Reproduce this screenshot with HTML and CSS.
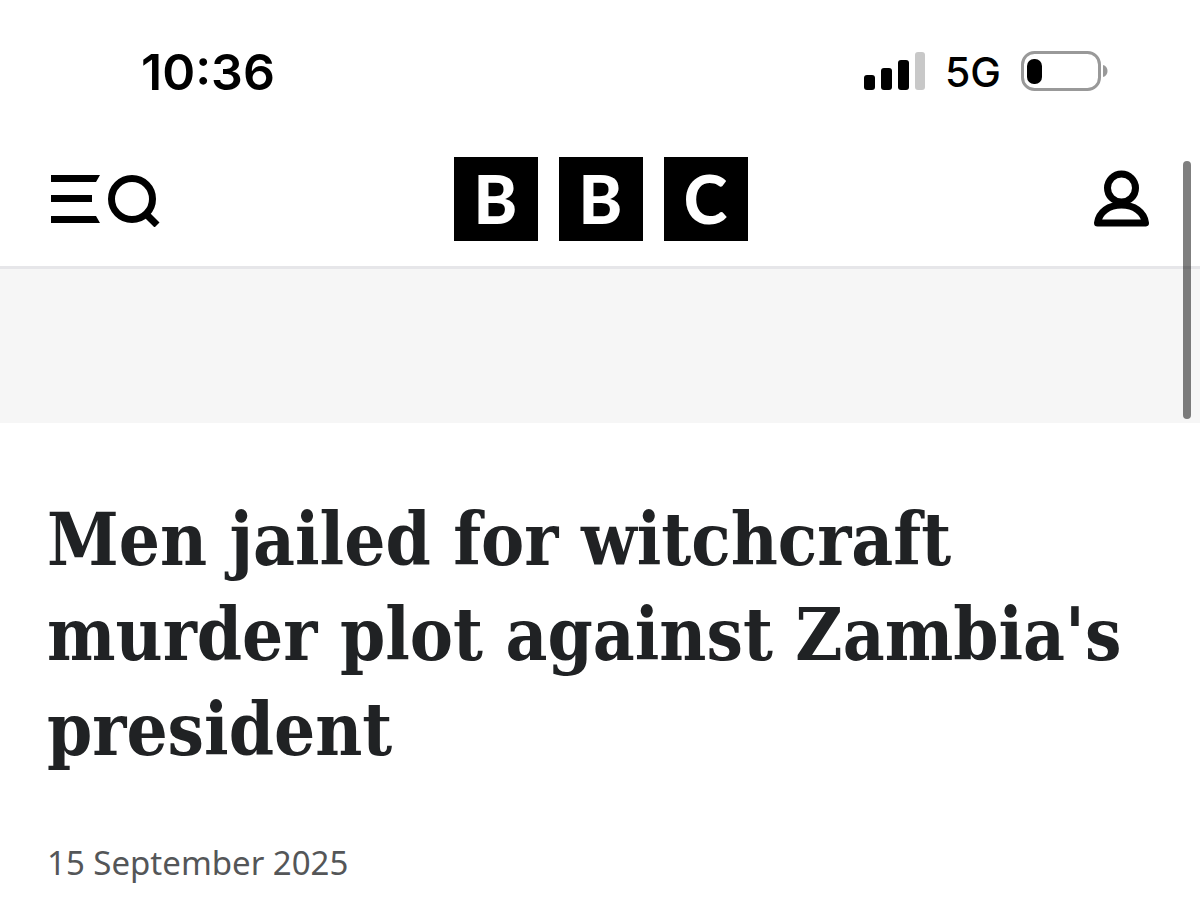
FILE: index.html
```html
<!DOCTYPE html>
<html lang="en-GB">
<head>
    <meta charset="UTF-8">
    <meta name="viewport" content="width=device-width, initial-scale=1.0">
    <title>Men jailed for witchcraft murder plot against Zambia's president</title>
    <link rel="stylesheet" href="styles.css">
</head>
<body>
    <div class="status-bar">
        <time class="clock">10:36</time>
        <div class="status-icons">
            <svg class="signal" width="62" height="40" viewBox="0 0 62 40" aria-hidden="true">
                <rect x="1" y="23" width="11" height="15" rx="3"/>
                <rect x="18" y="16" width="11" height="22" rx="3"/>
                <rect x="35" y="8" width="11" height="30" rx="3"/>
                <rect class="signal-off" x="52" y="0" width="10" height="38" rx="3"/>
            </svg>
            <span class="network">5G</span>
            <svg class="battery" width="90" height="42" viewBox="0 0 90 42" aria-hidden="true">
                <rect class="battery-case" x="1.5" y="1.5" width="77" height="37" rx="12"/>
                <rect x="6" y="8" width="15" height="25" rx="7"/>
                <path class="battery-tip" d="M82 14c6 1 6 11 0 12z"/>
            </svg>
        </div>
    </div>

    <header class="header">
        <button class="icon-button" type="button" aria-label="Menu and search">
            <svg width="112" height="56" viewBox="0 0 112 56" aria-hidden="true">
                <path d="M2 4h49l-4 7H2zM2 24h41v7H2zM2 45h45l4 7H2z"/>
                <circle class="line" cx="83" cy="28" r="20.5"/>
                <path class="line" d="M96 42l12 12"/>
            </svg>
        </button>
        <a class="logo" href="#" aria-label="BBC home">
            <span class="block">B</span>
            <span class="block">B</span>
            <span class="block">C</span>
        </a>
        <button class="icon-button" type="button" aria-label="Account">
            <svg width="58" height="58" viewBox="0 0 58 58" aria-hidden="true">
                <circle class="line" cx="27.500" cy="18" r="14"/>
                <path class="line" d="M3.500 53C5 42 15 35 27.500 35s22.500 7 24 18z"/>
            </svg>
        </button>
    </header>

    <div class="banner"></div>

    <main class="article">
        <h1>Men jailed for witchcraft murder plot against Zambia's president</h1>
        <time class="date" datetime="2025-09-15">15 September 2025</time>
    </main>

    <div class="scrollbar"></div>
</body>
</html>
```

FILE: styles.css
```css
body {
    margin: 0;
    background-color: #fff;
    color: #202224;
    font-family: "Noto Sans", sans-serif;
    position: relative;
}
.status-bar {
    display: flex;
    justify-content: space-between;
    align-items: center;
    height: 144px;
    padding: 0 89px 0 141px;
    box-sizing: border-box;
    color: #000;
    font-family: Inter, sans-serif;
}
.clock {
    font-size: 50px;
    font-weight: 600;
}
.status-icons {
    display: flex;
    align-items: center;
    gap: 20px;
}
.network {
    font-size: 41px;
    font-weight: 500;
}
.signal-off {
    fill: #c8c8c8;
}
.battery-case {
    fill: none;
    stroke: #999;
    stroke-width: 3;
}
.battery-tip {
    fill: #999;
}
.header {
    display: grid;
    grid-template-columns: 1fr auto 1fr;
    align-items: center;
    padding: 13px 48px 25px 49px;
    border-bottom: 3px solid #e6e6e9;
}
.icon-button {
    justify-self: start;
    display: flex;
    padding: 0;
    border: none;
    background: none;
    cursor: pointer;
}
.icon-button:last-child {
    justify-self: end;
}
.line {
    fill: none;
    stroke: #000;
    stroke-width: 7;
    stroke-linejoin: round;
}
.logo {
    display: flex;
    gap: 21px;
    text-decoration: none;
}
.block {
    width: 84px;
    background-color: #000;
    color: #fff;
    font-family: Lato, sans-serif;
    font-size: 66px;
    font-weight: 900;
    line-height: 84px;
    text-align: center;
}
.banner {
    height: 154px;
    background-color: #f6f6f6;
}
.article {
    padding: 69px 47px 24px;
}
h1 {
    margin: 0 0 62px;
    font-family: "DejaVu Serif Condensed", "DejaVu Serif", serif;
    font-size: 72px;
    font-weight: 700;
    line-height: 95px;
}
.date {
    display: block;
    color: #545658;
    font-size: 33px;
    line-height: 48px;
}
/* overlay scrollbar at the right edge */
.scrollbar {
    position: absolute;
    top: 161px;
    right: 9px;
    width: 8px;
    height: 258px;
    border-radius: 4px;
    background-color: rgba(0, 0, 0, 0.5);
}
```
